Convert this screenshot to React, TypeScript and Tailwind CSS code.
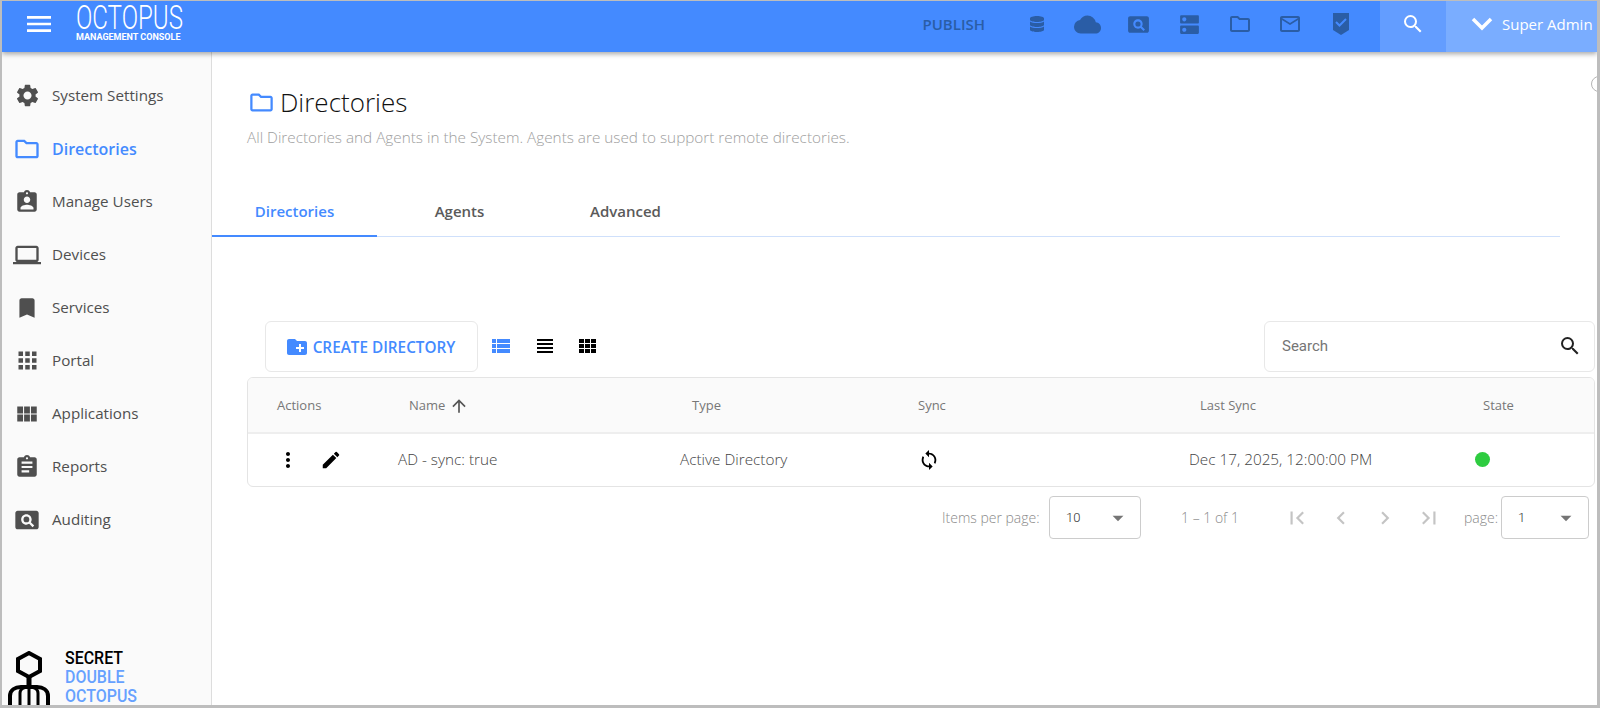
import {
  MdSettings, MdOutlineFolder, MdAssignmentInd, MdOutlineLaptop, MdBookmark, MdApps, MdViewModule, MdAssignment, MdPageview,
  MdCloud, MdDns, MdMailOutline, MdSearch, MdMenu, MdCreateNewFolder, MdViewList, MdViewHeadline,
  MdMoreVert, MdEdit, MdSync, MdArrowUpward, MdFirstPage, MdLastPage, MdChevronLeft, MdChevronRight, MdArrowDropDown,
} from "react-icons/md";
import { FaDatabase } from "react-icons/fa";

const navItems = [
  { label: "System Settings", icon: <MdSettings size={27} /> },
  { label: "Directories", icon: <MdOutlineFolder size={28} />, active: true },
  { label: "Manage Users", icon: <MdAssignmentInd size={26} /> },
  { label: "Devices", icon: <MdOutlineLaptop size={28} /> },
  { label: "Services", icon: <MdBookmark size={26} /> },
  { label: "Portal", icon: <MdApps size={27} /> },
  { label: "Applications", icon: <MdViewModule size={26} /> },
  { label: "Reports", icon: <MdAssignment size={26} /> },
  { label: "Auditing", icon: <MdPageview size={28} /> },
];

const columns = "grid grid-cols-[150px_282px_238px_271px_286px_1fr] items-center";

function ShieldCheck() {
  return (
    <svg width="18" height="24" viewBox="0 0 18 24">
      <path d="M1 1h16v17l-8 5-8-5z" fill="#2a5da6" />
      <path d="M4 10l3.5 3.5L14 7" stroke="#448aff" strokeWidth="2" fill="none" />
    </svg>
  );
}

function GridIcon() {
  return (
    <svg width="18" height="14" viewBox="0 0 18 14" fill="#000">
      <rect x="0" y="0" width="5" height="4" />
      <rect x="6" y="0" width="5" height="4" />
      <rect x="12" y="0" width="5" height="4" />
      <rect x="0" y="5" width="5" height="4" />
      <rect x="6" y="5" width="5" height="4" />
      <rect x="12" y="5" width="5" height="4" />
      <rect x="0" y="10" width="5" height="4" />
      <rect x="6" y="10" width="5" height="4" />
      <rect x="12" y="10" width="5" height="4" />
    </svg>
  );
}

function OctopusLogo() {
  return (
    <svg width="42" height="54" viewBox="0 0 42 54" fill="none" stroke="#000" strokeWidth="4">
      <path d="M21 2l11 6v12l-11 6-11-6V8z" />
      <path d="M21 26v9" strokeWidth="5" />
      <path d="M2 54V45c0-6 5-9 11-9h16c6 0 11 3 11 9v9" />
      <path d="M12 54V42c0-4 4-6 9-6s9 2 9 6v12" strokeWidth="3" />
      <path d="M21 36v18" strokeWidth="3" />
    </svg>
  );
}

function PageSelect({ value, width }: { value: string; width: string }) {
  return (
    <div className={`${width} h-[43px] border border-[#ccc] rounded flex items-center justify-between pl-[16px] pr-[9px] font-['Roboto',sans-serif] text-[13px] text-[#333]`}>
      <span>{value}</span>
      <MdArrowDropDown size={26} className="text-[#757575]" />
    </div>
  );
}

export default function App() {
  return (
    <div className="relative h-[708px] w-[1600px] box-border overflow-hidden border-t border-l-2 border-r-[3px] border-b-[3px] border-[#bdbdbd] bg-white font-['Open_Sans',sans-serif] flex flex-col">
      <header className="relative z-10 h-[51px] shrink-0 bg-[#448aff] flex items-center shadow-[0_2px_5px_rgba(0,0,0,0.35)]">
        <MdMenu size={32} className="ml-[21px] mb-[5px] text-white" />
        <div className="ml-[21px] mb-[7px] w-[110px] text-white font-['Roboto',sans-serif]">
          <div className="origin-left scale-x-[0.73] text-[33px] font-light leading-[28px] whitespace-nowrap">OCTOPUS</div>
          <div className="text-[9px] font-bold leading-[10px] whitespace-nowrap">MANAGEMENT CONSOLE</div>
        </div>
        <div className="ml-auto mb-[5px] flex items-center text-[#2a5da6]">
          <span className="mr-[26px] text-[15px] font-semibold">PUBLISH</span>
          <div className="w-[51px] flex justify-center"><FaDatabase size={16} /></div>
          <div className="w-[51px] flex justify-center"><MdCloud size={27} /></div>
          <div className="w-[51px] flex justify-center"><MdPageview size={25} /></div>
          <div className="w-[51px] flex justify-center"><MdDns size={25} /></div>
          <div className="w-[49px] flex justify-center"><MdOutlineFolder size={24} /></div>
          <div className="w-[51px] flex justify-center"><MdMailOutline size={24} /></div>
          <div className="w-[51px] flex justify-center mr-[14px]"><ShieldCheck /></div>
        </div>
        <div className="w-[66px] h-full bg-[#639dff] flex justify-center items-center pb-[6px]">
          <MdSearch size={24} className="text-white" />
        </div>
        <div className="w-[151px] h-full bg-[#7aadff] flex items-center text-white pb-[5px] overflow-hidden">
          <svg width="22" height="14" viewBox="0 0 22 14" fill="none" stroke="#fff" strokeWidth="3.5" className="ml-[25px] shrink-0">
            <path d="M2 2l9 9 9-9" />
          </svg>
          <span className="ml-[9px] text-[15px] whitespace-nowrap">Super Admin</span>
        </div>
      </header>

      <div className="flex flex-1 min-h-0">
        <aside className="w-[210px] shrink-0 bg-[#fafafa] border-r border-[#dddddd] flex flex-col pt-[17px]">
          {navItems.map((item) => (
            <div key={item.label} className={`h-[53px] flex items-center ${item.active ? "text-[#448aff]" : "text-[#4f4f4f]"}`}>
              <div className="w-[50px] flex justify-center">{item.icon}</div>
              <span className={item.active ? "text-[16px] font-semibold" : "text-[15.2px]"}>{item.label}</span>
            </div>
          ))}
          <div className="mt-auto flex items-end pl-[6px]">
            <OctopusLogo />
            <div className="ml-[15px] font-['Roboto',sans-serif] font-medium text-[19px] leading-[19px] origin-left scale-x-[0.84] whitespace-nowrap">
              <div className="text-black">SECRET</div>
              <div className="text-[#66a1ff]">DOUBLE</div>
              <div className="text-[#66a1ff]">OCTOPUS</div>
            </div>
          </div>
        </aside>

        <main className="flex-1 min-w-0 relative">
          <div className="pl-[36px] pt-[32px] h-[106px]">
            <div className="flex items-center h-[36px]">
              <MdOutlineFolder size={27} className="text-[#448aff]" />
              <h1 className="ml-[5px] text-[26px] font-light text-[#111]">Directories</h1>
            </div>
            <p className="mt-[6px] ml-[-1px] text-[15.3px] font-light text-[#9e9e9e]">
              All Directories and Agents in the System. Agents are used to support remote directories.
            </p>
          </div>

          <div className="mt-[29px] mr-[37px] h-[50px] flex border-b border-[#cfe0fb] text-[15px] font-semibold text-[#5a5a5a]">
            <div className="w-[165px] flex items-center justify-center text-[#448aff] border-b-2 border-[#448aff] h-[50px]">Directories</div>
            <div className="w-[165px] flex items-center justify-center">Agents</div>
            <div className="w-[165px] flex items-center justify-center ml-[1px]">Advanced</div>
          </div>

          <div className="mt-[83px] ml-[35px] mr-[2px] flex flex-col">
            <div className="flex items-center h-[52px] ml-[18px]">
              <div className="w-[213px] h-[51px] pt-[2px] pr-[3px] border border-[#e8e8e8] rounded-md flex items-center justify-center text-[#448aff] text-[15.3px] font-semibold">
                <MdCreateNewFolder size={24} />
                <span className="ml-[4px]">CREATE DIRECTORY</span>
              </div>
              <MdViewList size={24} className="ml-[11px] text-[#448aff]" />
              <MdViewHeadline size={24} className="ml-[20px] text-black" />
              <div className="ml-[22px]"><GridIcon /></div>
              <div className="ml-auto w-[331px] h-[51px] border border-[#e8e8e8] rounded-md flex items-center justify-between pl-[17px] pr-[12px] font-['Roboto',sans-serif] text-[15px] text-[#757575]">
                <span>Search</span>
                <MdSearch size={24} className="text-[#222]" />
              </div>
            </div>

            <div className="mt-[5px] border border-[#e4e4e4] rounded-md text-[#555] overflow-hidden">
              <div className={`${columns} h-[56px] pt-[2px] bg-[#fafafa] border-b-2 border-[#eeeeee] text-[13px] text-[#777]`}>
                <span className="pl-[29px]">Actions</span>
                <span className="pl-[11px] flex items-center">Name<MdArrowUpward size={20} className="ml-[4px] text-[#555]" /></span>
                <span className="pl-[12px]">Type</span>
                <span>Sync</span>
                <span className="pl-[11px]">Last Sync</span>
                <span className="pl-[8px]">State</span>
              </div>
              <div className={`${columns} h-[52px] pb-[1px] text-[15.3px] font-light text-[#444]`}>
                <div className="flex items-center pl-[28px]">
                  <MdMoreVert size={24} className="text-black" />
                  <MdEdit size={22} className="ml-[20px] text-black" />
                </div>
                <span>AD - sync: true</span>
                <span>Active Directory</span>
                <MdSync size={22} className="text-black" />
                <span>Dec 17, 2025, 12:00:00 PM</span>
                <span className="block w-[15px] h-[15px] rounded-full bg-[#2ecc40]" />
              </div>
            </div>

            <div className="mt-[9px] flex items-center text-[14px] font-light text-[#8a8a8a]">
              <span className="ml-[695px] w-[107px] whitespace-nowrap">Items per page:</span>
              <PageSelect value="10" width="w-[92px]" />
              <span className="ml-[40px] w-[57px] whitespace-nowrap">1 – 1 of 1</span>
              <div className="ml-[46px] flex items-center text-[#c4c4c4]">
                <MdFirstPage size={26} />
                <MdChevronLeft size={26} className="ml-[18px]" />
                <MdChevronRight size={26} className="ml-[18px]" />
                <MdLastPage size={26} className="ml-[18px]" />
              </div>
              <span className="ml-[22px] w-[37px] whitespace-nowrap">page:</span>
              <PageSelect value="1" width="w-[88px]" />
            </div>
          </div>

          <span className="absolute right-[-10px] top-[24px] w-[16px] h-[16px] rounded-full border border-[#b5b5b5]" />
        </main>
      </div>
    </div>
  );
}
